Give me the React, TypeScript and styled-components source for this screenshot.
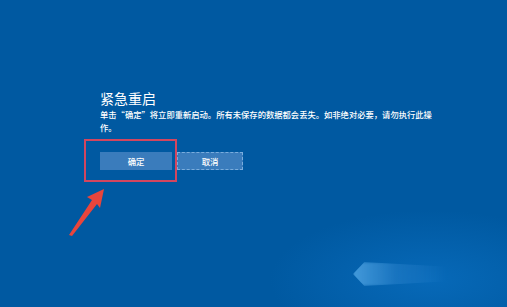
import styled, { createGlobalStyle } from "styled-components";

const GlobalStyle = createGlobalStyle`
    html, body {
        margin: 0;
        padding: 0;
        background: #0059a1;
    }
`

const Screen = styled.div`
    position: relative;
    width: 507px;
    height: 307px;
    box-sizing: border-box;
    padding: 90px 0 0 100px;
    overflow: hidden;
    display: flex;
    flex-direction: column;
    background: radial-gradient(ellipse 160px 70px at 430px 280px, #0769b8 0%, rgba(0, 89, 161, 0) 100%), #0059a1;
    color: #fff;
    font-family: "Noto Sans CJK SC", "Noto Sans", sans-serif;
`

const Title = styled.div`
    font-size: 14px;
    line-height: 16px;
`

const Message = styled.div`
    margin-top: 2px;
    font-size: 8.3px;
    font-weight: 500;
    line-height: 13px;
    white-space: nowrap;
`

const Actions = styled.div`
    position: relative;
    display: flex;
    gap: 5px;
    margin-top: 18px;
`

const Button = styled.div<{ $width: number; $dashed?: boolean }>`
    width: ${({ $width }) => $width}px;
    height: 18px;
    box-sizing: border-box;
    display: flex;
    align-items: center;
    justify-content: center;
    font-size: 8.4px;
    font-weight: 500;
    background: #3a7cbc;
    border: 1px ${({ $dashed }) => $dashed ? 'dashed rgba(150, 195, 235, 0.7)' : 'solid #3a7cbc'};
`

const Highlight = styled.div`
    position: absolute;
    left: -16px;
    top: -13px;
    width: 93px;
    height: 43px;
    box-sizing: border-box;
    border: 2px solid #d3465f;
    pointer-events: none;
`

const Arrow = styled.svg`
    position: absolute;
    left: 60px;
    top: 180px;
`

const Glare = styled.div`
    position: absolute;
    left: 353px;
    top: 262px;
    width: 95px;
    height: 24px;
    filter: blur(1.5px);
    clip-path: polygon(0 50%, 12% 0, 100% 20%, 100% 80%, 12% 100%);
    background: linear-gradient(90deg, rgba(120, 200, 255, 0.55), rgba(80, 160, 230, 0.25) 45%, rgba(0, 89, 161, 0));
`

export default function App() {
    return (
        <Screen>
            <GlobalStyle />
            <Title>紧急重启</Title>
            <Message>
                单击“确定”将立即重新启动。所有未保存的数据都会丢失。如非绝对必要，请勿执行此操<br />作。
            </Message>
            <Actions>
                <Button $width={72}>确定</Button>
                <Button $width={66} $dashed>取消</Button>
                <Highlight />
            </Actions>
            <Glare />
            <Arrow width="60" height="60" viewBox="0 0 60 60">
                <path d="M44 9 L27 17 L32 20 L9 55 L12 56 L37 24 L40 28 Z" fill="#e8453c" />
            </Arrow>
        </Screen>
    )
}
